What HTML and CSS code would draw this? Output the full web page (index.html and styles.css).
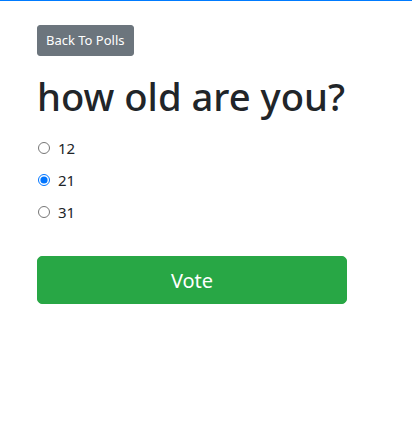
FILE: index.html
```html
<!DOCTYPE html>
<html>
<head>
<meta charset="utf-8">
<link rel="stylesheet" href="styles.css">
</head>
<body>
<div class="topbar"></div>
<div class="page">
  <button class="btn-back">Back To Polls</button>
  <h1 class="title">how old are you?</h1>
  <form class="poll">
    <label class="option"><input type="radio" name="age"> <span>12</span></label>
    <label class="option"><input type="radio" name="age" checked> <span>21</span></label>
    <label class="option"><input type="radio" name="age"> <span>31</span></label>
    <button type="button" class="btn-vote">Vote</button>
  </form>
</div>
</body>
</html>
```
FILE: styles.css
```css
* { box-sizing: border-box; }
body {
  margin: 0;
  font-family: "Noto Sans", "Open Sans", sans-serif;
  color: #212529;
  background: #fff;
  font-size: 16px;
  line-height: 1.5;
}
.topbar { height: 1px; background: #007bff; }
.page {
  padding: 24px 37px 0 37px;
  width: 412px;
}
.btn-back {
  display: inline-block;
  font-family: inherit;
  font-size: 13px;
  line-height: 21px;
  padding: 4px 8px;
  color: #fff;
  background: #6c757d;
  border: 1px solid #6c757d;
  border-radius: 3px;
}
.title {
  font-size: 38.2px;
  font-weight: 550;
  line-height: 48px;
  margin: 16px 0 16px 0;
}
.poll { display: flex; flex-direction: column; }
.option {
  display: flex;
  align-items: center;
  height: 24px;
  margin-bottom: 8px;
  font-size: 15px;
}
.option input { margin: 0 8px 0 1px; width: 12px; height: 12px; }
.btn-vote {
  margin-top: 24px;
  width: 310px;
  height: 48px;
  font-family: inherit;
  font-size: 20px;
  color: #fff;
  background: #28a745;
  border: 1px solid #28a745;
  border-radius: 5px;
}
```
